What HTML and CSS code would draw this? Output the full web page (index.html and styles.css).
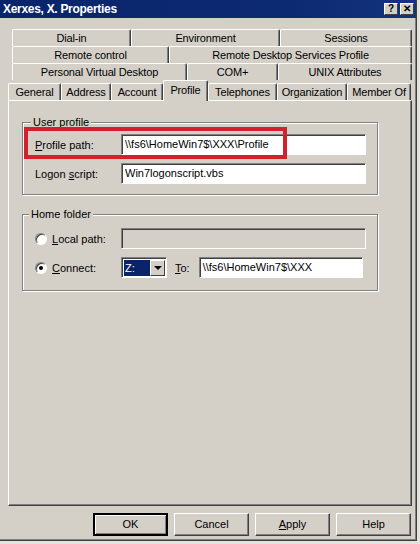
FILE: index.html
```html
<!DOCTYPE html>
<html lang="en">
<head>
  <meta charset="UTF-8">
  <title>Xerxes, X. Properties</title>
  <link rel="stylesheet" href="styles.css">
</head>
<body>

  <div class="window">
    <!-- Title bar -->
    <div class="titlebar">
      <span class="title">Xerxes, X. Properties</span>
      <div class="title-buttons">
        <span class="tbtn">?</span>
        <span class="tbtn">&#x2715;</span>
      </div>
    </div>

    <div class="dialog">
      <!-- Tab rows -->
      <div class="tabrow row1">
        <div class="tab">Dial-in</div>
        <div class="tab">Environment</div>
        <div class="tab">Sessions</div>
      </div>
      <div class="tabrow row2">
        <div class="tab">Remote control</div>
        <div class="tab">Remote Desktop Services Profile</div>
      </div>
      <div class="tabrow row3">
        <div class="tab">Personal Virtual Desktop</div>
        <div class="tab">COM+</div>
        <div class="tab">UNIX Attributes</div>
      </div>
      <div class="tabrow row4">
        <div class="tab">General</div>
        <div class="tab">Address</div>
        <div class="tab">Account</div>
        <div class="tab selected">Profile</div>
        <div class="tab">Telephones</div>
        <div class="tab">Organization</div>
        <div class="tab">Member Of</div>
      </div>

      <!-- Tab page -->
      <div class="panel">
        <fieldset class="group">
          <legend>User profile</legend>
          <div class="field first">
            <label><u>P</u>rofile path:</label>
            <div class="input">\\fs6\HomeWin7$\XXX\Profile</div>
            <div class="highlight"></div>
          </div>
          <div class="field">
            <label>Logon <u>s</u>cript:</label>
            <div class="input">Win7logonscript.vbs</div>
          </div>
        </fieldset>

        <fieldset class="group home">
          <legend>Home folder</legend>
          <div class="field">
            <span class="radio"></span>
            <label class="radio-label"><u>L</u>ocal path:</label>
            <div class="input disabled"></div>
          </div>
          <div class="field">
            <span class="radio checked"></span>
            <label class="radio-label"><u>C</u>onnect:</label>
            <div class="combo">
              <span class="combo-value">Z:</span>
              <span class="combo-btn"></span>
            </div>
            <label class="to-label"><u>T</u>o:</label>
            <div class="input to-input">\\fs6\HomeWin7$\XXX</div>
          </div>
        </fieldset>
      </div>

      <!-- Dialog buttons -->
      <div class="buttons">
        <div class="btn default">OK</div>
        <div class="btn">Cancel</div>
        <div class="btn"><u>A</u>pply</div>
        <div class="btn">Help</div>
      </div>
    </div>
  </div>

</body>
</html>
```

FILE: styles.css
```css
* {
  box-sizing: border-box;
}

body {
  margin: 0;
  width: 420px;
  height: 544px;
  background: #e4e2dc;
  font-family: "Liberation Sans", Arial, sans-serif;
  font-size: 11px;
  color: #000;
  overflow: hidden;
}

.window {
  width: 417px;
  height: 541px;
  background: #d4d0c8;
  border-right: 1px solid #404040;
  border-bottom: 1px solid #404040;
  box-shadow: inset -1px -1px 0 #808080;
}

/* Title bar */
.titlebar {
  height: 18px;
  background: linear-gradient(to right, #0a246a, #0c2a72 70%, #14337e);
  display: flex;
  align-items: center;
  justify-content: space-between;
  padding: 0 2px 0 3px;
}

.title {
  color: #fff;
  font-weight: bold;
  font-size: 12px;
  letter-spacing: -0.3px;
}

.title-buttons {
  display: flex;
  gap: 2px;
}

.tbtn {
  width: 14px;
  height: 12px;
  background: #d4d0c8;
  border: 1px solid;
  border-color: #fff #404040 #404040 #fff;
  font-size: 10px;
  font-weight: bold;
  line-height: 10px;
  text-align: center;
}

/* Dialog body */
.dialog {
  padding: 11px 0 0 8px;
}

.tabrow {
  display: grid;
  height: 17px;
  letter-spacing: -0.15px;
}

.row1 { grid-template-columns: 119px 149px 132px; margin-left: 4px; }
.row2 { grid-template-columns: 157px 243px; margin-left: 4px; }
.row3 { grid-template-columns: 175px 91px 134px; margin-left: 4px; }
.row4 {
  grid-template-columns: 53px 50px 52px 45px 69px 70px 64px;
  height: 20px;
  position: relative;
  z-index: 1;
}

.tab {
  background: #d4d0c8;
  border-top: 1px solid #fff;
  border-left: 1px solid #fff;
  border-right: 1px solid #404040;
  box-shadow: inset -1px 0 0 #808080;
  border-radius: 2px 2px 0 0;
  text-align: center;
  line-height: 16px;
  white-space: nowrap;
}

.row4 .tab {
  margin-top: 3px;
  height: 17px;
}

.row4 .tab.selected {
  margin-top: 0;
  height: 21px;
  line-height: 18px;
}

.panel {
  width: 404px;
  height: 406px;
  border: 1px solid;
  border-color: #fff #404040 #404040 #fff;
  box-shadow: inset -1px -1px 0 #808080;
  padding: 15px 0 0 13px;
}

/* Group boxes */
.group {
  width: 356px;
  margin: 0;
  padding: 5px 0 10px 0;
  border: 1px solid #808080;
  box-shadow: inset 1px 1px 0 #fff, 1px 1px 0 #fff;
}

.group legend {
  margin-left: 8px;
  padding: 0 2px;
  line-height: 13px;
  background: #d4d0c8;
}

.group.home {
  margin-top: 13px;
  padding: 7px 0 12px 0;
}

.group.home legend {
  margin-left: 6px;
}

.field {
  display: flex;
  align-items: center;
  height: 21px;
  padding-left: 12px;
  position: relative;
}

.field + .field {
  margin-top: 8px;
}

.field label {
  width: 86px;
}

.input {
  width: 245px;
  height: 21px;
  background: #fff;
  border: 1px solid;
  border-color: #808080 #fff #fff #808080;
  box-shadow: inset 1px 1px 0 #404040;
  padding: 3px 3px 0 3px;
  white-space: nowrap;
}

.input.disabled {
  background: #d4d0c8;
}

/* Red annotation frame */
.highlight {
  position: absolute;
  left: 1px;
  top: -7px;
  width: 263px;
  height: 32px;
  border: 4px solid #d3202c;
}

/* Radio buttons */
.radio {
  width: 12px;
  height: 12px;
  border-radius: 50%;
  background: #fff;
  border: 1px solid;
  border-color: #808080 #fff #fff #808080;
  box-shadow: inset 1px 1px 0 #404040;
  margin-right: 5px;
  flex-shrink: 0;
  position: relative;
}

.radio.checked::after {
  content: "";
  position: absolute;
  left: 3px;
  top: 3px;
  width: 4px;
  height: 4px;
  border-radius: 50%;
  background: #000;
}

.field .radio-label {
  width: 69px;
}

/* Drive combo */
.combo {
  width: 46px;
  height: 21px;
  display: flex;
  background: #fff;
  border: 1px solid;
  border-color: #808080 #fff #fff #808080;
  box-shadow: inset 1px 1px 0 #404040;
  padding: 2px 1px 1px 2px;
}

.combo-value {
  flex: 1;
  background: #0a246a;
  color: #fff;
  padding-left: 1px;
  line-height: 16px;
}

.combo-btn {
  width: 15px;
  background: #d4d0c8;
  border: 1px solid;
  border-color: #fff #404040 #404040 #fff;
  display: flex;
  align-items: center;
  justify-content: center;
}

.combo-btn::after {
  content: "";
  border-left: 4px solid transparent;
  border-right: 4px solid transparent;
  border-top: 4px solid #000;
}

.field .to-label {
  width: auto;
  margin: 0 9px 0 8px;
}

.input.to-input {
  width: 164px;
}

/* Bottom buttons */
.buttons {
  display: flex;
  gap: 6px;
  margin: 7px 0 0 85px;
}

.btn {
  width: 75px;
  height: 23px;
  border: 1px solid;
  border-color: #fff #404040 #404040 #fff;
  box-shadow: inset -1px -1px 0 #808080;
  text-align: center;
  line-height: 20px;
}

.btn.default {
  border: 2px solid #000;
  box-shadow: inset 1px 1px 0 #fff, inset -1px -1px 0 #808080;
  line-height: 19px;
}
```
